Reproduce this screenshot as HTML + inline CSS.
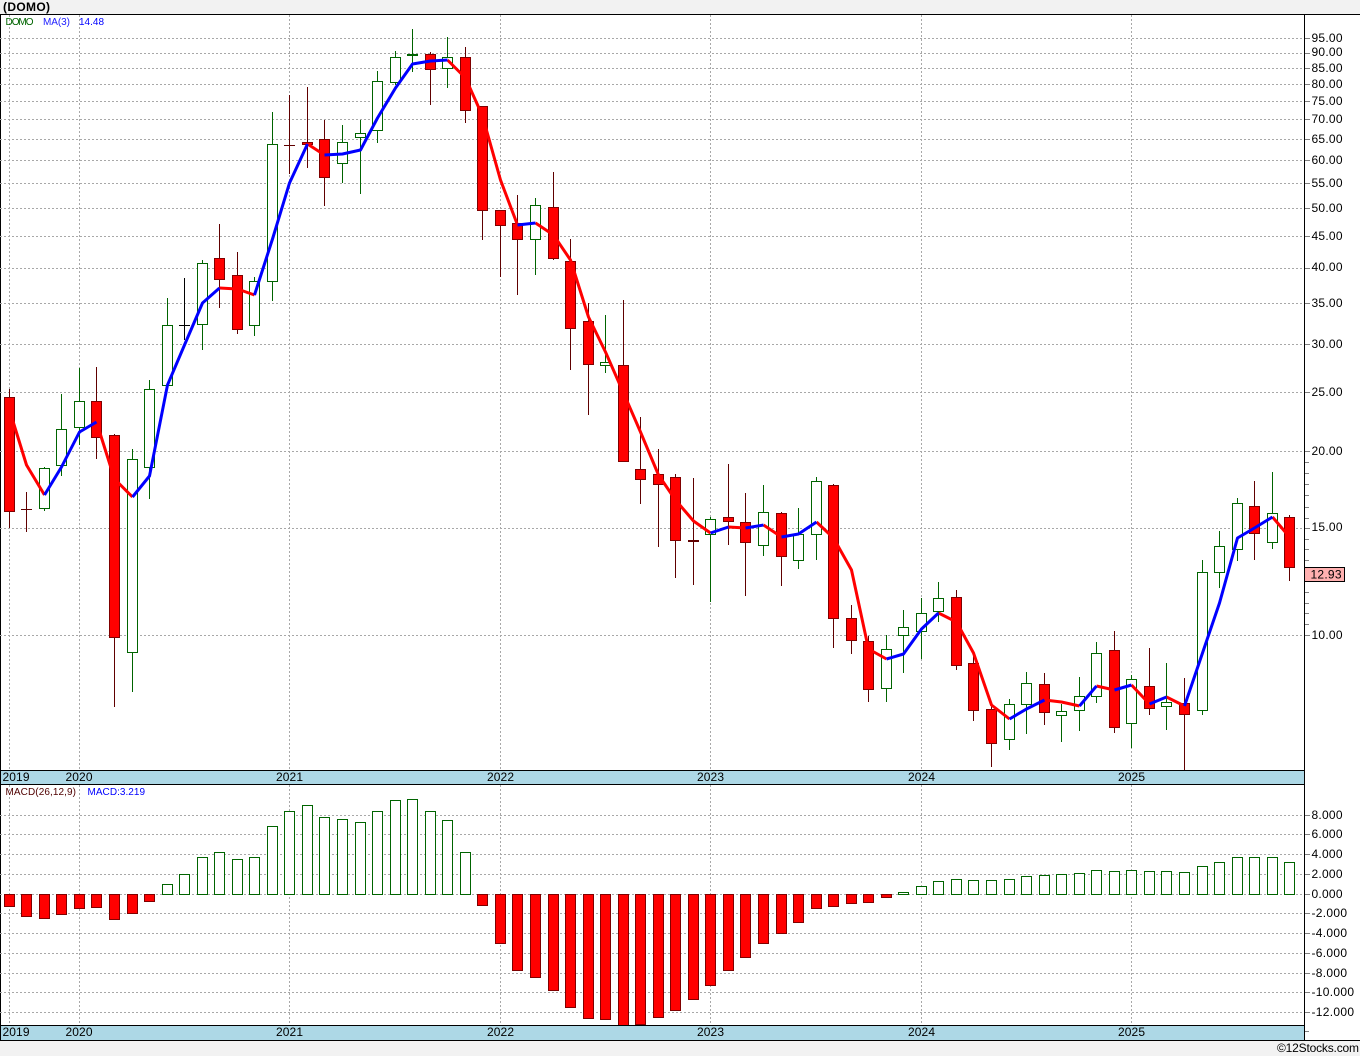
<!DOCTYPE html>
<html lang="en">
<head>
<meta charset="utf-8">
<title>(DOMO)</title>
<style>
html,body{margin:0;padding:0;background:#f2f2f2;width:1360px;height:1056px;overflow:hidden}
svg{display:block}
text{font-family:"Liberation Sans",sans-serif;font-size:12px;fill:#000}
.c{shape-rendering:crispEdges}
</style>
</head>
<body>
<svg xmlns="http://www.w3.org/2000/svg" width="1360" height="1056" viewBox="0 0 1360 1056">
<rect x="0" y="0" width="1360" height="1056" fill="#f2f2f2"/>
<rect x="0" y="14" width="1360" height="1027" fill="#fff"/>
<path class="c" d="M0 14.5H1360M0.5 14V1041M1304.5 14V1041M0 1040.5H1360" stroke="#000" fill="none"/>

<!-- grid -->
<path class="c" stroke="#a8a8a8" stroke-dasharray="2 2" fill="none" d="M0 38.5H1304M0 53.5H1304M0 68.5H1304M0 84.5H1304M0 101.5H1304M0 119.5H1304M0 139.5H1304M0 160.5H1304M0 183.5H1304M0 208.5H1304M0 236.5H1304M0 268.5H1304M0 303.5H1304M0 344.5H1304M0 392.5H1304M0 451.5H1304M0 528.5H1304M0 635.5H1304M0 815.5H1304M0 834.5H1304M0 854.5H1304M0 874.5H1304M0 894.5H1304M0 913.5H1304M0 933.5H1304M0 953.5H1304M0 973.5H1304M0 992.5H1304M0 1012.5H1304"/>
<path class="c" stroke="#a8a8a8" stroke-dasharray="2 2" fill="none" d="M9.5 15V770M79.5 15V770M289.5 15V770M500.5 15V770M710.5 15V770M921.5 15V770M1131.5 15V770M9.5 785V1025M79.5 785V1025M289.5 785V1025M500.5 785V1025M710.5 785V1025M921.5 785V1025M1131.5 785V1025"/>

<!-- axis ticks -->
<path class="c" stroke="#808080" fill="none" d="M1305 38.5h5M1305 53.5h5M1305 68.5h5M1305 84.5h5M1305 101.5h5M1305 119.5h5M1305 139.5h5M1305 160.5h5M1305 183.5h5M1305 208.5h5M1305 236.5h5M1305 268.5h5M1305 303.5h5M1305 344.5h5M1305 392.5h5M1305 451.5h5M1305 528.5h5M1305 635.5h5M1305 815.5h5M1305 834.5h5M1305 854.5h5M1305 874.5h5M1305 894.5h5M1305 913.5h5M1305 933.5h5M1305 953.5h5M1305 973.5h5M1305 992.5h5M1305 1012.5h5M1305 1031.5h4M1305 462.5h4M1305 473.5h4M1305 484.5h4M1305 495.5h4M1305 507.5h4M1305 518.5h4M1305 539.5h4M1305 549.5h4M1305 560.5h4M1305 592.5h4M1305 603.5h4M1305 613.5h4M1305 624.5h4"/>

<!-- wicks -->
<path class="c" stroke="#600000" fill="none" d="M9.5 389V528M96.5 367V459M114.5 434V707M219.5 224V308M237.5 252V334M289.5 95V174M307.5 87V168M324.5 120V206M430.5 52V105M465.5 47V123M482.5 107V240M500.5 210V277M517.5 195V295M553.5 172V260M570.5 239V370M588.5 303V415M623.5 300V462M640.5 417V504M658.5 449V547M675.5 474V578M693.5 478V585M728.5 464V545M745.5 493V596M781.5 512V586M833.5 484V648M851.5 605V654M868.5 636V702M956.5 590V670M973.5 655V721M991.5 705V767M1044.5 673V725M1114.5 631V733M1149.5 648V715M1184.5 678V770M1254.5 481V560M1289.5 515V581M26.5 492V532M21 509.5h11M284 145.5h11"/>
<path class="c" stroke="#006400" fill="none" d="M44.5 467V511M61.5 394V476M79.5 368V445M132.5 449V692M149.5 380V499M167.5 298V385M202.5 260V350M254.5 277V336M272.5 112V301M342.5 125V183M360.5 120V194M377.5 71V143M395.5 51V85M412.5 29V72M447.5 37V88M535.5 198V275M605.5 315V373M710.5 517V602M763.5 485V556M798.5 508V569M816.5 477V560M886.5 635V702M903.5 610V673M921.5 598V659M938.5 582V622M1009.5 699V750M1026.5 672V734M1061.5 704V742M1079.5 677V731M1096.5 642V703M1131.5 675V748M1166.5 663V730M1202.5 560V715M1219.5 531V588M1237.5 498V561M1272.5 472V549"/>
<path class="c" stroke="#000" fill="none" d="M184.5 278V340M179 325.5h11"/>

<!-- bodies -->
<path class="c" stroke="#800000" fill="#f00" d="M4.5 397.5h10V511.5h-10zM91.5 401.5h10V437.5h-10zM109.5 435.5h10V637.5h-10zM214.5 258.5h10V279.5h-10zM232.5 275.5h10V329.5h-10zM302.5 142.5h10V144.5h-10zM319.5 139.5h10V177.5h-10zM425.5 54.5h10V69.5h-10zM460.5 57.5h10V110.5h-10zM477.5 106.5h10V210.5h-10zM495.5 210.5h10V225.5h-10zM512.5 223.5h10V239.5h-10zM548.5 207.5h10V258.5h-10zM565.5 261.5h10V328.5h-10zM583.5 321.5h10V364.5h-10zM618.5 365.5h10V461.5h-10zM635.5 469.5h10V479.5h-10zM653.5 474.5h10V484.5h-10zM670.5 477.5h10V540.5h-10zM723.5 517.5h10V521.5h-10zM740.5 522.5h10V542.5h-10zM776.5 513.5h10V556.5h-10zM828.5 485.5h10V618.5h-10zM846.5 618.5h10V640.5h-10zM863.5 641.5h10V689.5h-10zM951.5 597.5h10V665.5h-10zM968.5 663.5h10V710.5h-10zM986.5 709.5h10V743.5h-10zM1039.5 684.5h10V712.5h-10zM1109.5 650.5h10V727.5h-10zM1144.5 686.5h10V708.5h-10zM1179.5 703.5h10V714.5h-10zM1249.5 506.5h10V533.5h-10zM1284.5 517.5h10V567.5h-10z"/>
<path class="c" stroke="#006400" fill="#fff" d="M39.5 468.5h10V508.5h-10zM56.5 429.5h10V465.5h-10zM74.5 401.5h10V427.5h-10zM127.5 459.5h10V652.5h-10zM144.5 389.5h10V467.5h-10zM162.5 325.5h10V385.5h-10zM197.5 263.5h10V324.5h-10zM249.5 281.5h10V325.5h-10zM267.5 144.5h10V281.5h-10zM337.5 142.5h10V163.5h-10zM355.5 133.5h10V137.5h-10zM372.5 81.5h10V130.5h-10zM390.5 57.5h10V82.5h-10zM442.5 57.5h10V68.5h-10zM530.5 205.5h10V239.5h-10zM600.5 362.5h10V365.5h-10zM705.5 519.5h10V534.5h-10zM758.5 512.5h10V545.5h-10zM793.5 534.5h10V560.5h-10zM811.5 481.5h10V534.5h-10zM881.5 649.5h10V688.5h-10zM898.5 627.5h10V635.5h-10zM916.5 613.5h10V631.5h-10zM933.5 598.5h10V611.5h-10zM1004.5 704.5h10V739.5h-10zM1021.5 683.5h10V704.5h-10zM1056.5 711.5h10V715.5h-10zM1074.5 696.5h10V710.5h-10zM1091.5 653.5h10V696.5h-10zM1126.5 679.5h10V723.5h-10zM1161.5 702.5h10V706.5h-10zM1197.5 572.5h10V710.5h-10zM1214.5 546.5h10V572.5h-10zM1232.5 503.5h10V549.5h-10zM1267.5 513.5h10V542.5h-10z"/>
<rect class="c" x="407" y="54" width="11" height="2" fill="#006400"/>
<rect class="c" x="688" y="540" width="11" height="2" fill="#600000"/>

<!-- moving average -->
<path fill="none" stroke="#f00" stroke-width="3" stroke-linejoin="round" d="M9.5 410L26.5 465L44.5 495M96.5 422L114.5 479L132.5 497M219.5 288L237.5 289L254.5 295M307.5 144L324.5 155M447.5 60L465.5 78L482.5 116L500.5 180L517.5 225M535.5 223L553.5 235L570.5 260L588.5 317L605.5 352L623.5 393L640.5 432L658.5 475L675.5 500L693.5 521L710.5 533M728.5 527L745.5 528M763.5 525L781.5 537M816.5 522L833.5 538L851.5 570L868.5 649L886.5 659M938.5 613L956.5 622L973.5 653L991.5 705L1009.5 719M1044.5 700L1061.5 702L1079.5 706M1096.5 686L1114.5 690M1131.5 685L1149.5 704M1166.5 697L1184.5 706M1272.5 517L1289.5 537"/>
<path fill="none" stroke="#00f" stroke-width="3" stroke-linejoin="round" d="M44.5 495L61.5 467L79.5 432L96.5 422M132.5 497L149.5 476L167.5 385L184.5 345L202.5 303L219.5 288M254.5 295L272.5 239L289.5 183L307.5 144M324.5 155L342.5 154L360.5 150L377.5 118L395.5 88L412.5 64L430.5 61L447.5 60M517.5 225L535.5 223M710.5 533L728.5 527M745.5 528L763.5 525M781.5 537L798.5 534L816.5 522M886.5 659L903.5 654L921.5 629L938.5 613M1009.5 719L1026.5 709L1044.5 700M1079.5 706L1096.5 686M1114.5 690L1131.5 685M1149.5 704L1166.5 697M1184.5 706L1202.5 653L1219.5 603L1237.5 538L1254.5 528L1272.5 517"/>

<!-- MACD bars -->
<path class="c" stroke="#800000" fill="#f00" d="M4.5 894.5h10V906.5h-10zM21.5 894.5h10V916.5h-10zM39.5 894.5h10V918.5h-10zM56.5 894.5h10V914.5h-10zM74.5 894.5h10V908.5h-10zM91.5 894.5h10V907.5h-10zM109.5 894.5h10V919.5h-10zM127.5 894.5h10V913.5h-10zM144.5 894.5h10V901.5h-10zM477.5 894.5h10V905.5h-10zM495.5 894.5h10V943.5h-10zM512.5 894.5h10V970.5h-10zM530.5 894.5h10V977.5h-10zM548.5 894.5h10V990.5h-10zM565.5 894.5h10V1007.5h-10zM583.5 894.5h10V1018.5h-10zM600.5 894.5h10V1019.5h-10zM618.5 894.5h10V1027.5h-10zM635.5 894.5h10V1024.5h-10zM653.5 894.5h10V1017.5h-10zM670.5 894.5h10V1010.5h-10zM688.5 894.5h10V999.5h-10zM705.5 894.5h10V985.5h-10zM723.5 894.5h10V970.5h-10zM740.5 894.5h10V957.5h-10zM758.5 894.5h10V943.5h-10zM776.5 894.5h10V933.5h-10zM793.5 894.5h10V922.5h-10zM811.5 894.5h10V908.5h-10zM828.5 894.5h10V906.5h-10zM846.5 894.5h10V903.5h-10zM863.5 894.5h10V902.5h-10zM881.5 894.5h10V897.5h-10z"/>
<path class="c" stroke="#006400" fill="#fff" d="M162.5 884.5h10V894.5h-10zM179.5 874.5h10V894.5h-10zM197.5 857.5h10V894.5h-10zM214.5 852.5h10V894.5h-10zM232.5 859.5h10V894.5h-10zM249.5 857.5h10V894.5h-10zM267.5 826.5h10V894.5h-10zM284.5 811.5h10V894.5h-10zM302.5 805.5h10V894.5h-10zM319.5 817.5h10V894.5h-10zM337.5 819.5h10V894.5h-10zM355.5 822.5h10V894.5h-10zM372.5 811.5h10V894.5h-10zM390.5 800.5h10V894.5h-10zM407.5 799.5h10V894.5h-10zM425.5 811.5h10V894.5h-10zM442.5 820.5h10V894.5h-10zM460.5 852.5h10V894.5h-10zM898.5 892.5h10V894.5h-10zM916.5 886.5h10V894.5h-10zM933.5 881.5h10V894.5h-10zM951.5 879.5h10V894.5h-10zM968.5 880.5h10V894.5h-10zM986.5 880.5h10V894.5h-10zM1004.5 879.5h10V894.5h-10zM1021.5 876.5h10V894.5h-10zM1039.5 875.5h10V894.5h-10zM1056.5 874.5h10V894.5h-10zM1074.5 873.5h10V894.5h-10zM1091.5 870.5h10V894.5h-10zM1109.5 871.5h10V894.5h-10zM1126.5 870.5h10V894.5h-10zM1144.5 871.5h10V894.5h-10zM1161.5 871.5h10V894.5h-10zM1179.5 872.5h10V894.5h-10zM1197.5 866.5h10V894.5h-10zM1214.5 862.5h10V894.5h-10zM1232.5 857.5h10V894.5h-10zM1249.5 857.5h10V894.5h-10zM1267.5 857.5h10V894.5h-10zM1284.5 862.5h10V894.5h-10z"/>

<!-- time bars -->
<rect class="c" x="1" y="771" width="1303" height="13" fill="#add8e6"/>
<rect class="c" x="1" y="1026" width="1303" height="14" fill="#add8e6"/>
<path class="c" stroke="#000" fill="none" d="M0 770.5H1304M0 784.5H1304M0 1025.5H1304"/>

<text x="3" y="11" style="font-weight:bold" textLength="47">(DOMO)</text>
<text x="5.5" y="25" style="font-size:10px;fill:#006400" textLength="28">DOMO</text>
<text x="43" y="25" style="font-size:10px;fill:#2020ff" textLength="27">MA(3)</text>
<text x="79" y="25" style="font-size:10px;fill:#0000ff" textLength="25">14.48</text>
<text x="5.5" y="795" style="font-size:10px;fill:#500000" textLength="70.5">MACD(26,12,9)</text>
<text x="87.5" y="795" style="font-size:10px;fill:#0000ff" textLength="57.5">MACD:3.219</text>

<g>
<text x="2.5" y="781" textLength="27">2019</text><text x="65.5" y="781" textLength="27">2020</text><text x="276" y="781" textLength="27">2021</text><text x="487" y="781" textLength="27">2022</text><text x="697" y="781" textLength="27">2023</text><text x="908" y="781" textLength="27">2024</text><text x="1118" y="781" textLength="27">2025</text>
<text x="2.5" y="1036" textLength="27">2019</text><text x="65.5" y="1036" textLength="27">2020</text><text x="276" y="1036" textLength="27">2021</text><text x="487" y="1036" textLength="27">2022</text><text x="697" y="1036" textLength="27">2023</text><text x="908" y="1036" textLength="27">2024</text><text x="1118" y="1036" textLength="27">2025</text>
</g>

<g>
<text x="1311.5" y="42" textLength="31">95.00</text>
<text x="1311.5" y="56" textLength="31">90.00</text>
<text x="1311.5" y="72" textLength="31">85.00</text>
<text x="1311.5" y="88" textLength="31">80.00</text>
<text x="1311.5" y="105" textLength="31">75.00</text>
<text x="1311.5" y="123" textLength="31">70.00</text>
<text x="1311.5" y="143" textLength="31">65.00</text>
<text x="1311.5" y="164" textLength="31">60.00</text>
<text x="1311.5" y="187" textLength="31">55.00</text>
<text x="1311.5" y="212" textLength="31">50.00</text>
<text x="1311.5" y="240" textLength="31">45.00</text>
<text x="1311.5" y="271" textLength="31">40.00</text>
<text x="1311.5" y="307" textLength="31">35.00</text>
<text x="1311.5" y="348" textLength="31">30.00</text>
<text x="1311.5" y="396" textLength="31">25.00</text>
<text x="1311.5" y="455" textLength="31">20.00</text>
<text x="1311.5" y="531" textLength="31">15.00</text>
<text x="1311.5" y="639" textLength="31">10.00</text>
</g>

<rect class="c" x="1304.5" y="567.5" width="40" height="14" fill="#ffb0b0" stroke="#000"/>
<text x="1310.5" y="578.5" textLength="31">12.93</text>

<g>
<text x="1311.5" y="819" textLength="31">8.000</text>
<text x="1311.5" y="838" textLength="31">6.000</text>
<text x="1311.5" y="858" textLength="31">4.000</text>
<text x="1311.5" y="878" textLength="31">2.000</text>
<text x="1311.5" y="898" textLength="31">0.000</text>
<text x="1311.5" y="917" textLength="35.5">-2.000</text>
<text x="1311.5" y="937" textLength="35.5">-4.000</text>
<text x="1311.5" y="957" textLength="35.5">-6.000</text>
<text x="1311.5" y="977" textLength="35.5">-8.000</text>
<text x="1311.5" y="996" textLength="42.5">-10.000</text>
<text x="1311.5" y="1016" textLength="42.5">-12.000</text>
</g>

<text x="1277" y="1052" textLength="82">©12Stocks.com</text>
</svg>
</body>
</html>
